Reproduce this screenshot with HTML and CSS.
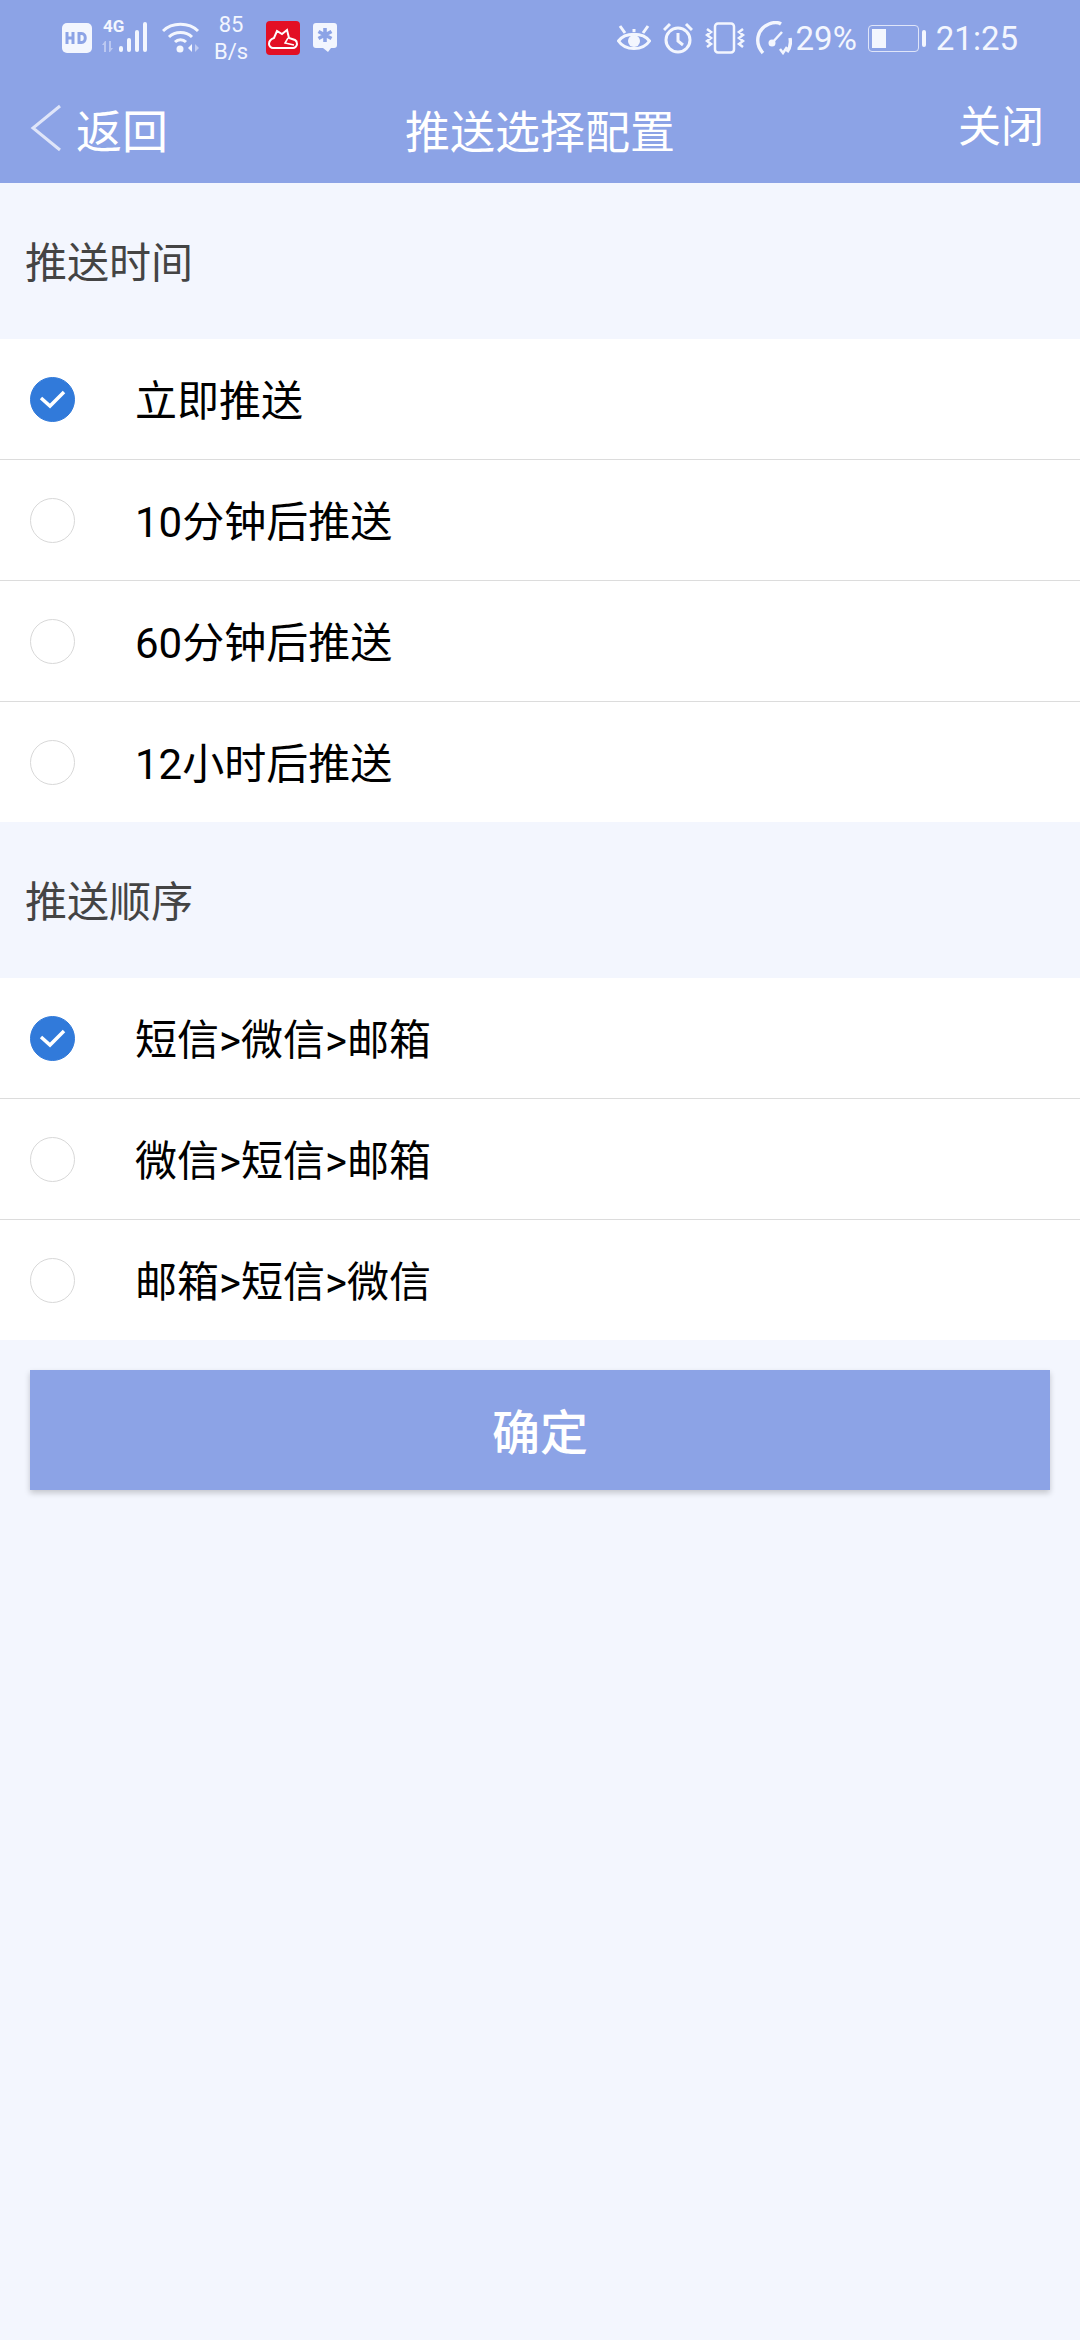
FILE: index.html
```html
<!DOCTYPE html>
<html lang="zh-CN">

<head>
    <meta charset="UTF-8">
    <meta name="viewport" content="width=device-width, initial-scale=1.0">
    <title>推送选择配置</title>
    <link rel="stylesheet" href="styles.css">
</head>

<body>
    <div class="header">
        <div class="status-bar">
            <div class="status-left">
                <svg class="ico-hd" width="30" height="30" viewBox="0 0 30 30">
                    <rect width="30" height="30" rx="5" fill="#f3f6fe" />
                    <path d="M5 9v12M5 15h6M11 9v12" stroke="#8ca3e6" stroke-width="3" fill="none" />
                    <path d="M17 10.500v9h2.500c5 0 5-9 0-9z" stroke="#8ca3e6" stroke-width="3" fill="none" />
                </svg>
                <div class="signal">
                    <span class="net-label">4G</span>
                    <svg width="50" height="32" viewBox="0 0 50 32">
                        <path d="M3 19l-3 4h2v7h2V19zM8 30l3-4H9v-7H7v11z" fill="#f3f6fe" fill-opacity=".45" />
                        <rect x="17" y="24" width="4" height="6" rx="2" fill="#f3f6fe" />
                        <rect x="25" y="16" width="4" height="14" rx="2" fill="#f3f6fe" />
                        <rect x="33" y="8" width="4" height="22" rx="2" fill="#f3f6fe" />
                        <rect x="41" y="0" width="4" height="30" rx="2" fill="#f3f6fe" />
                    </svg>
                </div>
                <svg class="ico-wifi" width="38" height="32" viewBox="0 0 38 32">
                    <path d="M1 9C10 0 27 0 36 9M7 15c6-6 17-6 23 0M13 20c3-3 8-3 11 0" stroke="#f3f6fe" stroke-width="3" fill="none" />
                    <circle cx="18" cy="27" r="3.500" fill="#f3f6fe" />
                    <path d="M30 22v8l-4-4z" fill="#f3f6fe" />
                    <path d="M33 22v8l4-4z" fill="#f3f6fe" fill-opacity=".5" />
                </svg>
                <div class="speed"><span>85</span><span>B/s</span></div>
                <svg class="ico-red" width="34" height="34" viewBox="0 0 34 34">
                    <rect width="34" height="34" rx="4" fill="#e30f24" />
                    <path d="M3 23c0-3 2-5 5-6l3-7 5 3 5-4 2 8 6 2c2 1 2 3 2 4 0 2-2 4-4 4H7c-2 0-4-2-4-4z" stroke="#fff" stroke-width="2" fill="none" />
                    <path d="M22 17l-3 5 9 2" stroke="#fff" stroke-width="1.500" fill="none" />
                </svg>
                <svg class="ico-msg" width="26" height="32" viewBox="0 0 26 32">
                    <path d="M4 1h18c2 0 3 1 3 3v19c0 2-1 3-3 3h-3l-3 4-5-4H4c-2 0-3-1-3-3V4c0-2 1-3 3-3z" fill="#f3f6fe" />
                    <path d="M13 6v14M6.500 9.500l13 7M19.500 9.500l-13 7" stroke="#8ca3e6" stroke-width="3.600" fill="none" />
                </svg>
            </div>
            <div class="status-right">
                <svg class="ico-eye" width="34" height="32" viewBox="0 0 34 32">
                    <path d="M1.500 19C8 10 26 10 32.500 19 26 29 8 29 1.500 19z" stroke="#f3f6fe" stroke-width="3" fill="none" />
                    <circle cx="17" cy="19" r="6" fill="#f3f6fe" />
                    <path d="M3 4l5 7M31 4l-5 7M17 7v3" stroke="#f3f6fe" stroke-width="3" fill="none" />
                </svg>
                <svg class="ico-alarm" width="30" height="32" viewBox="0 0 30 32">
                    <circle cx="15" cy="18" r="12" stroke="#f3f6fe" stroke-width="3" fill="none" />
                    <path d="M15 11v8l5 4M1 8l6-6M29 8l-6-6" stroke="#f3f6fe" stroke-width="3" fill="none" />
                </svg>
                <svg class="ico-vib" width="40" height="32" viewBox="0 0 40 32">
                    <rect x="10" y="1.500" width="19" height="29" rx="3" stroke="#f3f6fe" stroke-width="2.500" fill="none" />
                    <path d="M2 7l4 3-4 3 4 3-4 3 4 3-4 3M38 7l-4 3 4 3-4 3 4 3-4 3 4 3" stroke="#f3f6fe" stroke-width="2.500" fill="none" />
                </svg>
                <svg class="ico-speed" width="37" height="34" viewBox="0 0 37 34">
                    <path d="M8 32C-1 22 2 8 14 3c5-2 9-2 12 0M35 17c1 5 0 10-3 14" stroke="#f3f6fe" stroke-width="3.400" fill="none" />
                    <path d="M17 22l10-11" stroke="#f3f6fe" stroke-width="2.500" fill="none" />
                    <circle cx="17" cy="22" r="3.500" fill="#f3f6fe" />
                    <path d="M25 28l3 4 4-6" stroke="#f3f6fe" stroke-width="2.500" fill="none" />
                </svg>
                <span class="percent">29%</span>
                <div class="battery">
                    <div class="battery-body">
                        <div class="battery-level"></div>
                    </div>
                    <div class="battery-tip"></div>
                </div>
                <span class="clock">21:25</span>
            </div>
        </div>
        <div class="nav-bar">
            <div class="nav-back">
                <svg width="32" height="48" viewBox="0 0 32 48">
                    <path d="M30 2L3 24l27 22" stroke="#dfe5f9" stroke-width="3" fill="none" />
                </svg>
                <span>返回</span>
            </div>
            <div class="nav-title">推送选择配置</div>
            <div class="nav-close">关闭</div>
        </div>
    </div>

    <div class="section-title">推送时间</div>
    <div class="option-list">
        <div class="option">
            <span class="radio checked">
                <svg width="27" height="19" viewBox="0 0 27 19">
                    <path d="M2 8l9 8L25 2" stroke="#fff" stroke-width="3.500" fill="none" />
                </svg>
            </span>
            <span class="option-text">立即推送</span>
        </div>
        <div class="option"><span class="radio"></span><span class="option-text">10分钟后推送</span></div>
        <div class="option"><span class="radio"></span><span class="option-text">60分钟后推送</span></div>
        <div class="option"><span class="radio"></span><span class="option-text">12小时后推送</span></div>
    </div>

    <div class="section-title">推送顺序</div>
    <div class="option-list">
        <div class="option">
            <span class="radio checked">
                <svg width="27" height="19" viewBox="0 0 27 19">
                    <path d="M2 8l9 8L25 2" stroke="#fff" stroke-width="3.500" fill="none" />
                </svg>
            </span>
            <span class="option-text">短信&gt;微信&gt;邮箱</span>
        </div>
        <div class="option"><span class="radio"></span><span class="option-text">微信&gt;短信&gt;邮箱</span></div>
        <div class="option"><span class="radio"></span><span class="option-text">邮箱&gt;短信&gt;微信</span></div>
    </div>

    <div class="button-container">
        <button class="confirm-btn">确定</button>
    </div>
</body>

</html>
```

FILE: styles.css
```css
html,
body {
    height: 100%;
}

body {
    margin: 0;
    background-color: #f3f6fe;
    color: #000;
    font-family: Roboto, "Noto Sans CJK SC", sans-serif;
    overflow: hidden;
}

.header {
    height: 183px;
    background-color: #8ca3e6;
    color: #fff;
}

/* Status bar */
.status-bar {
    height: 76px;
    padding: 0 62px;
    display: flex;
    justify-content: space-between;
    align-items: center;
    color: #f3f6fe;
}

.status-left,
.status-right {
    display: flex;
    align-items: center;
}

.signal {
    position: relative;
    margin-left: 10px;
    width: 50px;
    height: 32px;
}

.net-label {
    position: absolute;
    left: 1px;
    top: -6px;
    font-size: 17px;
    font-weight: 700;
}

.ico-wifi {
    margin-left: 10px;
}

.speed {
    display: flex;
    flex-direction: column;
    align-items: center;
    margin-left: 13px;
    font-size: 22px;
    line-height: 27px;
    width: 36px;
}

.ico-red {
    margin-left: 17px;
}

.ico-msg {
    margin-left: 12px;
}

.ico-alarm {
    margin-left: 12px;
}

.ico-vib {
    margin-left: 12px;
}

.ico-speed {
    margin-left: 10px;
}

.percent {
    font-size: 33px;
    margin-left: 4px;
    margin-right: 11px;
}

.battery {
    display: flex;
    align-items: center;
    margin-right: 10px;
}

.battery-body {
    width: 51px;
    height: 27px;
    box-sizing: border-box;
    border: 1px solid #dfe5f9;
    border-radius: 4px;
    padding: 3px;
}

.battery-level {
    width: 14px;
    height: 100%;
    background-color: #f3f6fe;
}

.battery-tip {
    width: 4px;
    height: 17px;
    margin-left: 3px;
    background-color: #f3f6fe;
    border-radius: 2px;
}

.clock {
    font-size: 33px;
}

/* Nav bar */
.nav-bar {
    height: 107px;
    padding: 0 36px;
    display: grid;
    grid-template-columns: 1fr auto 1fr;
    align-items: center;
}

.nav-back {
    display: flex;
    align-items: center;
    gap: 14px;
    margin: 0 0 3px -6px;
    font-size: 46px;
}

.nav-title {
    font-size: 45px;
}

.nav-close {
    justify-self: end;
    font-size: 43px;
    margin-bottom: 14px;
}

/* Sections */
.section-title {
    height: 152px;
    padding: 0 0 4px 25px;
    display: flex;
    align-items: center;
    font-size: 42px;
    color: #444;
}

.option-list {
    background-color: #fff;
}

.option {
    height: 120px;
    padding-left: 30px;
    display: flex;
    align-items: center;
    gap: 60px;
    font-size: 42px;
    border-bottom: 1px solid #dcdcdc;
}

.option:last-child {
    border-bottom: none;
}

.option-text {
    margin-bottom: 3px;
}

.radio {
    width: 45px;
    height: 45px;
    box-sizing: border-box;
    border: 1px solid #d8d8d8;
    border-radius: 50%;
    display: flex;
    align-items: center;
    justify-content: center;
}

.radio.checked {
    background-color: #317ada;
    border-color: #317ada;
}

/* Confirm */
.button-container {
    padding: 30px;
}

.confirm-btn {
    display: block;
    width: 100%;
    height: 120px;
    padding: 0 0 2px;
    border: none;
    border-radius: 0;
    background-color: #8ca3e6;
    color: #fff;
    font-family: inherit;
    font-size: 48px;
    font-weight: 500;
    box-shadow: 0 3px 6px rgba(0, 0, 0, 0.2);
}
```
